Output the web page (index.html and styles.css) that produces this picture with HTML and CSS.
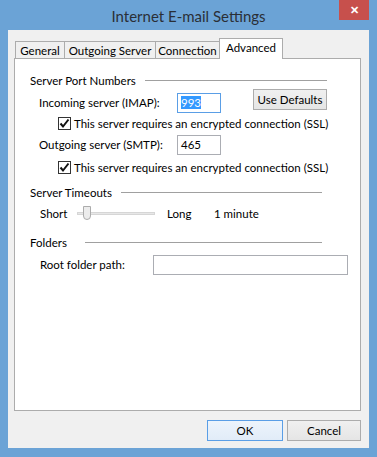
FILE: index.html
```html
<!DOCTYPE html>
<html>

<head>
    <title>Internet E-mail Settings</title>
    <link rel="stylesheet" href="styles.css">
</head>

<body>
    <div class="window">
        <div class="titlebar">
            <span class="title">Internet E-mail Settings</span>
            <span class="close">&#x2715;</span>
        </div>
        <div class="client">
            <div class="tabs">
                <span class="tab tab-general">General</span>
                <span class="tab tab-outgoing">Outgoing Server</span>
                <span class="tab tab-connection">Connection</span>
                <span class="tab tab-advanced active">Advanced</span>
            </div>
            <div class="panel">
                <div class="group group-ports">
                    <span class="group-title">Server Port Numbers</span>
                    <span class="group-line"></span>
                </div>
                <div class="row row-imap">
                    <span class="label">Incoming server (IMAP):</span>
                    <span class="field field-port focused"><span class="selected">993</span></span>
                    <span class="button btn-defaults">Use Defaults</span>
                </div>
                <div class="check-row check-first">
                    <span class="checkbox">
                        <svg width="11" height="11" viewBox="0 0 11 11"><path d="M1.5 5.5 L4 8.5 L9.5 1.5" fill="none" stroke="#111" stroke-width="2"/></svg>
                    </span>
                    <span>This server requires an encrypted connection (SSL)</span>
                </div>
                <div class="row row-smtp">
                    <span class="label">Outgoing server (SMTP):</span>
                    <span class="field field-port">465</span>
                </div>
                <div class="check-row check-second">
                    <span class="checkbox">
                        <svg width="11" height="11" viewBox="0 0 11 11"><path d="M1.5 5.5 L4 8.5 L9.5 1.5" fill="none" stroke="#111" stroke-width="2"/></svg>
                    </span>
                    <span>This server requires an encrypted connection (SSL)</span>
                </div>
                <div class="group group-timeouts">
                    <span class="group-title">Server Timeouts</span>
                    <span class="group-line"></span>
                </div>
                <div class="slider-row">
                    <span class="short">Short</span>
                    <span class="slider">
                        <span class="track"></span>
                        <span class="thumb"></span>
                    </span>
                    <span class="long">Long</span>
                    <span class="minutes">1 minute</span>
                </div>
                <div class="group group-folders">
                    <span class="group-title">Folders</span>
                    <span class="group-line"></span>
                </div>
                <div class="row row-root">
                    <span class="label label-root">Root folder path:</span>
                    <span class="field field-path"></span>
                </div>
            </div>
            <div class="actions">
                <span class="button btn-ok">OK</span>
                <span class="button btn-cancel">Cancel</span>
            </div>
        </div>
    </div>
</body>

</html>
```

FILE: styles.css
```css
body {
    margin: 0;
    font-family: 'Segoe UI', Lato, 'Noto Sans', sans-serif;
    font-size: 11.5px;
    color: #000;
}

.window {
    width: 377px;
    height: 457px;
    background-color: #6ba3d6;
    display: flex;
    flex-direction: column;
}

/* Title bar */

.titlebar {
    position: relative;
    height: 30px;
    display: flex;
    align-items: center;
    justify-content: center;
}

.title {
    font-size: 15px;
    color: #2a2f36;
    margin-top: 1px;
}

.close {
    position: absolute;
    top: 0;
    right: 8px;
    width: 30px;
    height: 20px;
    background-color: #c7504c;
    color: #fff;
    font-size: 11px;
    font-weight: bold;
    display: flex;
    align-items: center;
    justify-content: center;
}

/* Client area */

.client {
    flex: 1;
    margin: 0 8px 9px 8px;
    background-color: #f0f0f0;
    padding: 8px 8px 0 6px;
    display: flex;
    flex-direction: column;
}

.tabs {
    display: flex;
    height: 20px;
    align-items: flex-end;
    padding-left: 1px;
    position: relative;
    z-index: 1;
}

.tab {
    height: 17px;
    border: 1px solid #acacac;
    border-bottom: none;
    background-color: #f0f0f0;
    display: flex;
    align-items: center;
    justify-content: center;
    margin-right: -1px;
    box-sizing: border-box;
}

.tab-general {
    width: 50px;
}

.tab-outgoing {
    width: 92px;
}

.tab-connection {
    width: 65px;
}

.tab-advanced {
    width: 64px;
}

.tab.active {
    height: 21px;
    background-color: #fff;
    margin-bottom: -1px;
    align-items: flex-start;
    padding-top: 2px;
}

.panel {
    height: 353px;
    box-sizing: border-box;
    border: 1px solid #acacac;
    background-color: #fff;
    padding: 13px 0 0 15px;
}

/* Group headers */

.group {
    display: flex;
    align-items: center;
    height: 16px;
}

.group-line {
    flex: 1;
    height: 1px;
    background-color: #a0a0a0;
}

.group-ports {
    margin-right: 33px;
}

.group-ports .group-line {
    margin-left: 9px;
}

.group-timeouts {
    margin-top: 10px;
    margin-right: 38px;
}

.group-timeouts .group-line {
    margin-left: 9px;
}

.group-folders {
    margin-top: 13px;
    margin-right: 38px;
}

.group-folders .group-line {
    margin-left: 18px;
}

/* Rows */

.row {
    display: flex;
    align-items: flex-start;
    padding-left: 9px;
}

.row-imap {
    margin-top: 1px;
}

.row-smtp {
    margin-top: 5px;
}

.row-root {
    margin-top: 5px;
    padding-left: 10px;
}

.label {
    width: 138px;
    height: 20px;
    line-height: 20px;
    margin-top: 4px;
}

.row-smtp .label,
.label-root {
    margin-top: 0;
}

.label-root {
    width: 113px;
}

.field {
    height: 20px;
    box-sizing: border-box;
    border: 1px solid #abadb3;
    background-color: #fff;
    line-height: 18px;
    padding-left: 3px;
}

.field-port {
    width: 44px;
}

.row-imap .field-port {
    margin-top: 4px;
}

.focused {
    border-color: #5a9ee6;
}

.selected {
    background-color: #3399ff;
    color: #fff;
}

.field-path {
    width: 195px;
}

.check-row {
    display: flex;
    align-items: center;
    height: 14px;
    padding-left: 28px;
}

.check-first {
    margin-top: 3px;
}

.check-second {
    margin-top: 5px;
}

.checkbox {
    width: 13px;
    height: 13px;
    box-sizing: border-box;
    border: 1px solid #333;
    background-color: #fff;
    display: flex;
    align-items: center;
    justify-content: center;
    margin-right: 3px;
}

/* Slider */

.slider-row {
    display: flex;
    align-items: center;
    height: 16px;
    margin-top: 5px;
    padding-left: 10px;
}

.short {
    width: 37px;
}

.slider {
    position: relative;
    width: 78px;
    height: 16px;
    display: flex;
    align-items: center;
}

.track {
    width: 100%;
    height: 3px;
    box-sizing: border-box;
    border: 1px solid #d6d6d6;
    background-color: #e7e7e7;
}

.thumb {
    position: absolute;
    left: 6px;
    top: 1px;
    width: 8px;
    height: 14px;
    box-sizing: border-box;
    border: 1px solid #acacac;
    border-radius: 0 0 4px 4px;
    background-color: #ececec;
}

.long {
    margin-left: 12px;
    width: 47px;
}

/* Buttons */

.button {
    height: 21px;
    box-sizing: border-box;
    border: 1px solid #acacac;
    background: linear-gradient(#f0f0f0, #e5e5e5);
    display: flex;
    align-items: center;
    justify-content: center;
}

.btn-defaults {
    width: 74px;
    margin-left: 32px;
}

.actions {
    display: flex;
    justify-content: flex-end;
    gap: 4px;
    margin-top: 9px;
}

.btn-ok {
    width: 76px;
    border-color: #5a9ee6;
    background: linear-gradient(#edf4fc, #e1ecf8);
}

.btn-cancel {
    width: 74px;
}
```
